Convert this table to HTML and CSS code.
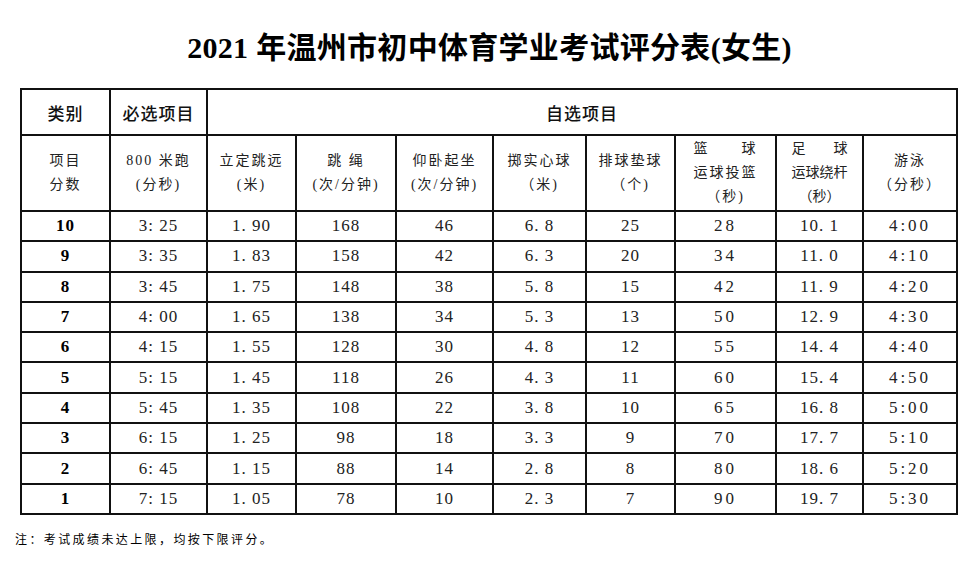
FILE: index.html
```html
<!DOCTYPE html>
<html lang="zh-CN">
<head>
<meta charset="utf-8">
<title>2021年温州市初中体育学业考试评分表(女生)</title>
<link rel="stylesheet" href="styles.css">
</head>
<body>
<div class="page">
  <h1 class="title">2021 年温州市初中体育学业考试评分表(女生)</h1>
  <table class="score">
    <colgroup>
      <col class="c1"><col class="c2"><col class="c3"><col class="c4"><col class="c5">
      <col class="c6"><col class="c7"><col class="c8"><col class="c9"><col class="c10">
    </colgroup>
    <thead>
      <tr class="h1">
        <th>类别</th>
        <th>必选项目</th>
        <th colspan="8">自选项目</th>
      </tr>
      <tr class="h2">
        <th>项目<br>分数</th>
        <th>800 米跑<br>(分秒)</th>
        <th>立定跳远<br>(米)</th>
        <th>跳 绳<br>(次/分钟)</th>
        <th>仰卧起坐<br>(次/分钟)</th>
        <th>掷实心球<br>（米)</th>
        <th>排球垫球<br>（个)</th>
        <th>篮　　球<br>运球投篮<br>（秒)</th>
        <th class="tight">足　　球<br>运球绕杆<br>（秒）</th>
        <th>游泳<br>（分秒）</th>
      </tr>
    </thead>
    <tbody>
      <tr><td class="s">10</td><td>3: 25</td><td>1. 90</td><td>168</td><td>46</td><td>6. 8</td><td>25</td><td class="w">28</td><td>10. 1</td><td class="w">4:00</td></tr>
      <tr><td class="s">9</td><td>3: 35</td><td>1. 83</td><td>158</td><td>42</td><td>6. 3</td><td>20</td><td class="w">34</td><td>11. 0</td><td class="w">4:10</td></tr>
      <tr><td class="s">8</td><td>3: 45</td><td>1. 75</td><td>148</td><td>38</td><td>5. 8</td><td>15</td><td class="w">42</td><td>11. 9</td><td class="w">4:20</td></tr>
      <tr><td class="s">7</td><td>4: 00</td><td>1. 65</td><td>138</td><td>34</td><td>5. 3</td><td>13</td><td class="w">50</td><td>12. 9</td><td class="w">4:30</td></tr>
      <tr><td class="s">6</td><td>4: 15</td><td>1. 55</td><td>128</td><td>30</td><td>4. 8</td><td>12</td><td class="w">55</td><td>14. 4</td><td class="w">4:40</td></tr>
      <tr><td class="s">5</td><td>5: 15</td><td>1. 45</td><td>118</td><td>26</td><td>4. 3</td><td>11</td><td class="w">60</td><td>15. 4</td><td class="w">4:50</td></tr>
      <tr><td class="s">4</td><td>5: 45</td><td>1. 35</td><td>108</td><td>22</td><td>3. 8</td><td>10</td><td class="w">65</td><td>16. 8</td><td class="w">5:00</td></tr>
      <tr><td class="s">3</td><td>6: 15</td><td>1. 25</td><td>98</td><td>18</td><td>3. 3</td><td>9</td><td class="w">70</td><td>17. 7</td><td class="w">5:10</td></tr>
      <tr><td class="s">2</td><td>6: 45</td><td>1. 15</td><td>88</td><td>14</td><td>2. 8</td><td>8</td><td class="w">80</td><td>18. 6</td><td class="w">5:20</td></tr>
      <tr><td class="s">1</td><td>7: 15</td><td>1. 05</td><td>78</td><td>10</td><td>2. 3</td><td>7</td><td class="w">90</td><td>19. 7</td><td class="w">5:30</td></tr>
    </tbody>
  </table>
  <p class="note">注：考试成绩未达上限，均按下限评分。</p>
</div>
</body>
</html>
```

FILE: styles.css
```css
html, body {
  margin: 0;
  padding: 0;
  background: #ffffff;
}

.page {
  width: 979px;
  height: 576px;
  font-family: "Liberation Serif", "Noto Sans CJK SC", serif;
  color: #222;
}

.title {
  margin: 0;
  padding: 30px 0 22px;
  height: 36px;
  line-height: 36px;
  font-size: 30px;
  font-weight: bold;
  color: #000;
  text-align: center;
  letter-spacing: 0.3px;
  font-family: "Liberation Serif", "Noto Sans CJK SC", serif;
}

.score {
  margin-left: 20px;
  width: 936px;
  border-collapse: collapse;
  table-layout: fixed;
}

.c1 { width: 89px; }
.c2 { width: 97px; }
.c3 { width: 89px; }
.c4 { width: 100px; }
.c5 { width: 97px; }
.c6 { width: 93px; }
.c7 { width: 89px; }
.c8 { width: 101px; }
.c9 { width: 87px; }
.c10 { width: 94px; }

.score th,
.score td {
  border: 2px solid #111;
  padding: 0;
  text-align: center;
  vertical-align: middle;
}

.h1 th {
  height: 44px;
  font-family: "Noto Sans CJK SC", sans-serif;
  font-size: 17px;
  font-weight: 500;
  letter-spacing: 1px;
  color: #111;
}

.h2 th {
  height: 74px;
  font-family: "Liberation Serif", "Noto Sans CJK SC", sans-serif;
  font-size: 14px;
  font-weight: normal;
  line-height: 24px;
  letter-spacing: 2px;
  color: #222;
}

.h2 th.tight {
  letter-spacing: 0;
}

.score td {
  height: 28.3px;
  font-size: 17px;
  letter-spacing: 1px;
  line-height: 20px;
}

.score td.s {
  font-weight: bold;
  color: #000;
}

.score td.w {
  letter-spacing: 3px;
}

.note {
  margin: 14px 0 0 15px;
  font-family: "Noto Sans CJK SC", sans-serif;
  font-size: 12px;
  line-height: 20px;
  letter-spacing: 2.4px;
  color: #000;
}
```
